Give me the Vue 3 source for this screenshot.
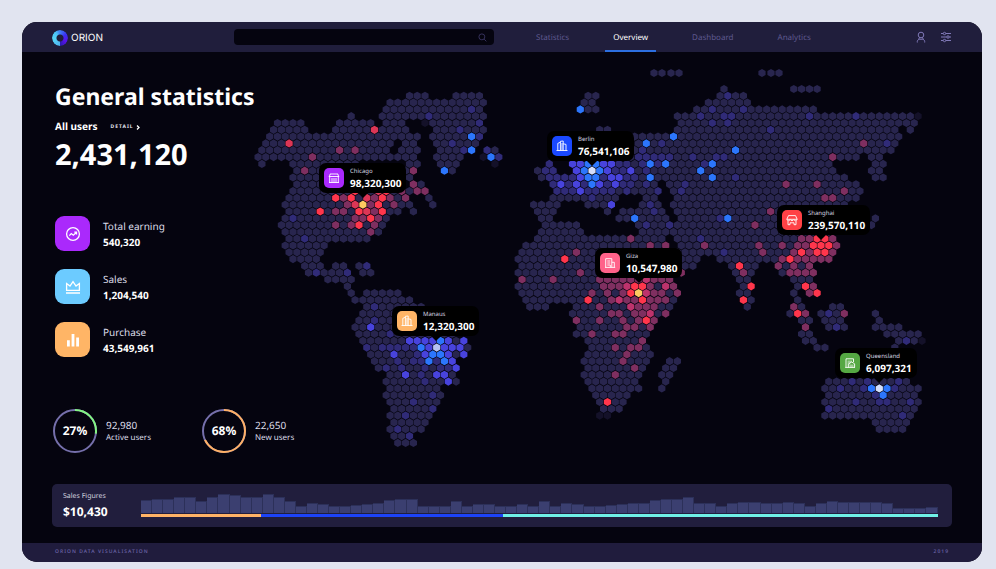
<script setup>
const nav = [
  { label: 'Statistics' },
  { label: 'Overview', active: true },
  { label: 'Dashboard' },
  { label: 'Analytics' },
]

const totals = [
  { label: 'Total earning', value: '540,320', icon: 'trend', tone: 'violet' },
  { label: 'Sales', value: '1,204,540', icon: 'crown', tone: 'sky' },
  { label: 'Purchase', value: '43,549,961', icon: 'bars', tone: 'orange' },
]

const rings = [
  { percent: 27, value: '92,980', label: 'Active users', tone: 'green' },
  { percent: 68, value: '22,650', label: 'New users', tone: 'amber' },
]

const sales = [
  13, 14, 14, 16, 16, 12, 16, 19, 18, 16, 16, 19, 16, 12, 7, 10, 9, 7, 7, 8, 9, 10, 13, 14,
  14, 7, 7, 7, 12, 7, 9, 9, 7, 7, 9, 7, 12, 7, 10, 9, 7, 7, 8, 9, 10, 10, 13, 14,
  14, 16, 10, 10, 7, 10, 11, 11, 10, 10, 11, 10, 7, 10, 12, 11, 11, 11, 11, 10, 5, 5, 5, 6,
]
const salesMax = 20

const segments = [
  { tone: 'amber', share: 120 },
  { tone: 'blue', share: 242 },
  { tone: 'cyan', share: 435 },
]

const MAP_W = 676
const MAP_H = 390

// x, y: top left corner of the label on the map; tip: arrow position inside it
const pins = [
  { city: 'Chicago', value: '98,320,300', x: 69, y: 97, tip: 44, tone: 'violet', icon: 'shop' },
  { city: 'Berlin', value: '76,541,106', x: 297, y: 65, tip: 45, tone: 'blue', icon: 'towers' },
  { city: 'Shanghai', value: '239,570,110', x: 527, y: 139, tip: 44, tone: 'red', icon: 'stall' },
  { city: 'Giza', value: '10,547,980', x: 345, y: 182, tip: 44, tone: 'pink', icon: 'office' },
  { city: 'Manaus', value: '12,320,300', x: 142, y: 240, tip: 44, tone: 'orange', icon: 'towers' },
  { city: 'Queensland', value: '6,097,321', x: 585, y: 282, tip: 44, tone: 'green', icon: 'depot' },
]

// Land cells per row of the hex grid, as column ranges
const land = [
  '61 70-73',
  '20-22 26-29 43-44 60-63',
  '18-30 43-44 59-64',
  '17-29 42-44 57-72',
  '13 17-30 55-85',
  '3-6 11-15 17-19 23-29 55-85',
  '3-7 11-20 24-30 45-46 55-83 85',
  '2-21 23-29 46-83',
  '2-18 20-21 24-29 45-83',
  '1-17 19-21 24-28 30-31 46-82',
  '1-21 24-27 31-32 46-78 80-81',
  '1 5-13 20-21 24-26 38 41-74 80-81',
  '6-15 20-21 25-26 37-39 42-75 80-81',
  '5-20 37-76 80-81',
  '6-18 21-22 39-52 54-78',
  '5-22 39-52 54-78',
  '5-20 23 39-47 51-52 55-78',
  '4-20 23 36-39 43-46 50-52 54-76',
  '5-19 21 37-39 46 48-53 55-76',
  '4-17 37-38 47-53 55-75 80',
  '4-17 38-42 50-74 80',
  '4-16 37-42 50-74',
  '5-15 37-53 55-75',
  '4-9 35-53 55-75',
  '5-9 35-75',
  '5-8 34-57 60-74',
  '7-9 11-12 14-15 35-57 62-65 68-72',
  '7-12 14-15 34-55 62-64 68-72',
  '10-13 35-54 63-64 70-72',
  '12 34-54 63-64 70-72',
  '13 15-19 35-55 63-64 70 72-73',
  '13-20 35-54 63-64 70',
  '15-22 36-38 42-54 64 70-71 75-76',
  '14-22 41-53 69-71 73-76 80',
  '14-24 42-52 71-72 74-76 81',
  '13-25 42-51 71 74-76 80-83',
  '14-26 42-51 71-72 82-86',
  '14-27 43-50 71-72 83-85',
  '15-28 44-51 73-74 83',
  '15-27 43-51',
  '16-26 43-51 54-55',
  '16-26 43-50 53-54',
  '18-26 43-50 53-54',
  '17-26 43-49 53 74-84',
  '18-24 44-50 53 74-86',
  '17-24 44-48 74-85',
  '18-24 45-48 74-86',
  '18-23 45-47 74-85',
  '18-23 74-85',
  '18-22 80-84',
  '18-22 81-84',
  '18-20',
  '19-21',
]

// Highlighted cells: tone -> row -> columns
const heat = {
  dim: { 4: '86', 5: '22', 10: '30', 11: '31', 37: '86', 48: '45-46' },
  indigo: {
    1: '61', 3: '28 59 63', 4: '23 58 61-62 72 78', 5: '29 59 61', 6: '27 67', 7: '29',
    8: '26 53 82', 9: '27 30 50', 10: '32 50-54 57 60-61', 11: '38 47-48 50 52 58',
    12: '38-39 47-48 51', 13: '38-41 45 48-49 62', 14: '39 41 43 46 48-49 51 56',
    15: '39-41 43-46 48 52 55', 16: '44', 17: '51', 18: '52', 19: '5 60', 20: '51 54',
    22: '7 58', 24: '61', 26: '15', 27: '8 12', 32: '16', 33: '74', 34: '16', 35: '75',
    36: '18', 37: '84', 38: '15 17-21', 39: '21', 40: '19 21-22 24', 41: '17 19 22 24-25',
    42: '22', 43: '22 77 79 83', 44: '76 79 83', 45: '23 80', 46: '21 78 81-82 85',
    47: '23 74', 48: '20 84', 50: '19', 51: '20',
  },
  iris: {
    11: '41-42 45-46', 12: '42 46 49', 13: '42 46-47', 14: '40 42 45 47', 15: '42', 17: '46',
    35: '15', 37: '20-23 25 27', 38: '23 25-27', 39: '18 22 25 27', 40: '26', 41: '26',
    42: '20 24-25', 43: '25',
  },
  blue: {
    3: '42', 7: '28 54', 8: '51', 9: '28 62', 10: '31', 11: '43-44 51 53 59',
    12: '25 43 45 58', 13: '43-44 51 59', 14: '44', 19: '49 61', 37: '24', 38: '22',
    39: '23-24', 40: '23 25', 44: '80 82', 45: '81',
  },
  plum: {
    8: '79', 9: '11 13', 10: '8 75', 12: '7 21', 14: '21 69 73', 15: '19 21-22 76',
    16: '12 16 18 20 74-75', 17: '12 15 18', 18: '11-12 16 67', 19: '13-14 16',
    20: '11 13 16 65', 21: '15', 22: '49 71-72 75', 23: '51 53 58 65 68 70-71 75',
    24: '42 66 70 72 75', 25: '68 70-74', 26: '68 70 72', 27: '42 55 63 69-72',
    28: '35 39 45-50 52-54', 29: '45-47 51 54 72', 30: '44 46 48 52-53 55 72',
    31: '46 48-49 51-53', 32: '45 50-52 70', 33: '46-47 49-50 53 71 76', 34: '42 45 48 50 52',
    35: '48-49 51 71', 36: '44 47-48', 37: '50', 38: '47 49-50', 39: '48', 40: '48',
    41: '49', 42: '47',
  },
  rose: { 28: '51', 29: '48 53', 30: '51', 31: '47', 32: '49', 33: '51' },
  crimson: { 6: '16', 8: '5', 15: '16', 16: '15', 17: '13', 18: '15' },
  red: {
    15: '13 17', 16: '11 13 17', 17: '16', 18: '9 14 17', 19: '15', 20: '14', 22: '73-74',
    23: '72-74', 24: '71 73-74', 25: '40 69', 26: '63', 29: '49-50 64 71', 30: '49 73',
    31: '43 50 63', 33: '70', 34: '51', 46: '46',
  },
  gold: { 17: '14', 30: '50' },
  ice: { 12: '44', 44: '81' },
  frost: { 38: '24' },
}

// Polar islands lie off the grid
const islands = [404, 412, 421, 429, 512, 521, 529].map((x) => [x, 7])

const expand = (text) =>
  text.split(' ').flatMap((part) => {
    const [from, to = from] = part.split('-').map(Number)
    return Array.from({ length: to - from + 1 }, (_, i) => from + i)
  })

const hexAt = (x, y) => `M${x.toFixed(1)} ${(y - 4.1).toFixed(1)}l3.6 2.1v4l-3.6 2.1l-3.6-2.1v-4z`
const cell = (row, col) => hexAt(0.3 + 7.765 * (col + (row % 2) / 2), 23 + 6.805 * row)

const hot = new Set()
const layers = Object.entries(heat).map(([tone, rows]) => {
  let d = ''
  for (const [row, text] of Object.entries(rows)) {
    for (const col of expand(text)) {
      hot.add(`${row}:${col}`)
      d += cell(Number(row), col)
    }
  }
  return { tone, d }
})
layers.unshift({
  tone: 'land',
  d:
    land
      .map((text, row) =>
        expand(text)
          .filter((col) => !hot.has(`${row}:${col}`))
          .map((col) => cell(row, col))
          .join(''),
      )
      .join('') + islands.map(([x, y]) => hexAt(x, y)).join(''),
})
</script>

<template>
  <div class="window">
    <header class="topbar">
      <a class="brand" href="#">
        <span class="brand-mark"></span>
        <span class="brand-name">ORION</span>
      </a>
      <label class="search">
        <input type="search" aria-label="Search" />
        <svg viewBox="0 0 10 10"><circle cx="4.3" cy="4.3" r="3.3" /><path d="M6.8 6.8L9.3 9.3" /></svg>
      </label>
      <nav class="nav">
        <a v-for="item in nav" :key="item.label" href="#" :class="{ active: item.active }">{{ item.label }}</a>
      </nav>
      <div class="tools">
        <button type="button" aria-label="Account">
          <svg viewBox="0 0 12 12"><circle cx="6" cy="4" r="2.8" /><path d="M2.3 11.5V10.4C2.3 8.8 3.9 8.2 6 8.2S9.7 8.8 9.7 10.4V11.5M4.6 6.3L3.6 8.6M7.4 6.3L8.4 8.6" /></svg>
        </button>
        <button type="button" aria-label="Settings">
          <svg viewBox="0 0 12 12"><path d="M1 2.5H3.2M5.8 2.5H11M1 6H6.7M9.3 6H11M1 9.5H3.2M5.8 9.5H11" /><circle cx="4.5" cy="2.5" r="1.2" /><circle cx="8" cy="6" r="1.2" /><circle cx="4.5" cy="9.5" r="1.2" /></svg>
        </button>
      </div>
    </header>

    <main class="content">
      <div class="stage">
        <section class="map">
          <svg class="hexes" :viewBox="`0 0 ${MAP_W} ${MAP_H}`" aria-hidden="true">
            <path v-for="layer in layers" :key="layer.tone" :class="layer.tone" :d="layer.d" />
          </svg>
          <article
            v-for="pin in pins"
            :key="pin.city"
            class="pin"
            :style="{ left: (pin.x / MAP_W) * 100 + '%', top: (pin.y / MAP_H) * 100 + '%', '--tip': pin.tip + 'px' }"
          >
            <span class="pin-icon" :class="pin.tone">
              <svg viewBox="0 0 20 20">
                <g v-if="pin.icon === 'shop'">
                  <path d="M6 6H14M5.4 8.5L6.2 6M14.6 8.5L13.8 6M4.8 8.5H15.2M5.7 8.5V14.5M14.3 8.5V14.5M5 14.5H15" />
                  <path class="soft" d="M7 10H13V14.5H7z" />
                </g>
                <g v-else-if="pin.icon === 'towers'">
                  <path d="M4.5 14.5H15.5M5.8 14.5V7.4L8.4 6.2M8.4 14.5V5.3L11.2 5V14.5M11.2 7.8L14 8.4V14.5" />
                  <path class="soft" d="M8.8 7H11V14H8.8z" />
                </g>
                <g v-else-if="pin.icon === 'stall'">
                  <path d="M6.5 5.6H13.5M6.5 5.6L4.8 9.3H15.2L13.5 5.6M5 9.5C5 11 7.5 11 8.2 9.7C8.8 11 11.2 11 11.8 9.7C12.5 11 15 11 15 9.5M6 11V14.7H8M14 11V14.7H12M8 14.7V12.8H12V14.7" />
                </g>
                <g v-else-if="pin.icon === 'office'">
                  <path d="M5.7 5.7H11.8V14.4M5.7 5.7V14.4M5 14.4H15.2M11.8 9.3H14.3V14.4M7.3 8H10.3M7.3 10H10.3M7.3 12H10.3V14.4" />
                </g>
                <g v-else>
                  <path d="M6 14.4V5.8H13.5V9M5.2 14.4H15M8.8 14.4V10.8L11.7 9L14.6 10.8V14.4" />
                  <path class="soft" d="M7.5 7.5H12V9L8.8 11V14.4H7.5zM10 11.5H13.5V14.4H10z" />
                </g>
              </svg>
            </span>
            <div>
              <h3>{{ pin.city }}</h3>
              <strong>{{ pin.value }}</strong>
            </div>
          </article>
        </section>

        <section class="summary">
          <h1>General statistics</h1>
          <div class="users">
            <h2>All users</h2>
            <a href="#">DETAIL<svg viewBox="0 0 4 5"><path d="M1 .5L3 2.5L1 4.5" /></svg></a>
          </div>
          <p class="headline">2,431,120</p>

          <ul class="totals">
            <li v-for="item in totals" :key="item.label">
              <span class="tile" :class="item.tone">
                <svg viewBox="0 0 16 16">
                  <g v-if="item.icon === 'trend'">
                    <circle cx="8" cy="8" r="6.4" />
                    <path d="M4.3 9.6L6.3 7.6L8.3 9.2L11.3 6.4M9.3 6.2H11.5V8.4" />
                  </g>
                  <g v-else-if="item.icon === 'crown'">
                    <path d="M1.6 11.3V4.5L5 7L8 2.6L11 7L14.4 4.5V11.3zM1 14H15" />
                  </g>
                  <g v-else class="solid">
                    <path d="M2 8.3H4.8V14.6H2zM6.6 2H9.4V14.6H6.6zM11.2 5.5H14V14.6H11.2z" />
                  </g>
                </svg>
              </span>
              <div>
                <h3>{{ item.label }}</h3>
                <strong>{{ item.value }}</strong>
              </div>
            </li>
          </ul>

          <ul class="rings">
            <li v-for="ring in rings" :key="ring.label">
              <div class="ring">
                <svg viewBox="0 0 44 44">
                  <circle class="track" cx="22" cy="22" r="21" />
                  <circle :class="ring.tone" cx="22" cy="22" r="21" pathLength="100" :stroke-dasharray="`${ring.percent} 100`" />
                </svg>
                <strong>{{ ring.percent }}%</strong>
              </div>
              <div>
                <p class="ring-value">{{ ring.value }}</p>
                <p class="ring-label">{{ ring.label }}</p>
              </div>
            </li>
          </ul>
        </section>
      </div>

      <section class="sales">
        <div class="sales-text">
          <h2>Sales Figures</h2>
          <strong>$10,430</strong>
        </div>
        <div class="chart">
          <div class="bars">
            <span v-for="(value, i) in sales" :key="i" :style="{ height: (value / salesMax) * 100 + '%' }"></span>
          </div>
          <div class="split">
            <span v-for="part in segments" :key="part.tone" :class="part.tone" :style="{ flexGrow: part.share }"></span>
          </div>
        </div>
      </section>
    </main>

    <footer class="footer">
      <span>ORION DATA VISUALISATION</span>
      <span>2019</span>
    </footer>
  </div>
</template>

<style>
body {
  margin: 0;
  background: #e1e4f0;
}
</style>

<style scoped>
* {
  box-sizing: border-box;
}
h1, h2, h3, p, ul {
  margin: 0;
  padding: 0;
  list-style: none;
}
a {
  color: inherit;
  text-decoration: none;
}
svg {
  display: block;
  fill: none;
}

.window {
  margin: 22px 14px 7px 22px;
  border-radius: 15px;
  overflow: hidden;
  background: #05040f;
  color: #fff;
  font-family: "Noto Sans", "Open Sans", sans-serif;
  text-rendering: geometricPrecision;
}

.topbar {
  display: flex;
  align-items: center;
  height: 30px;
  padding: 0 30px;
  background: #201e3c;
}
.brand {
  display: flex;
  align-items: center;
  gap: 3px;
  width: 182px;
  padding-top: 2px;
}
.brand-mark {
  width: 16px;
  height: 16px;
  border-radius: 50%;
  background: conic-gradient(#3f7df5, #3a2ff0 60deg, #5a12ea 120deg, #2b1bb0 178deg, #4fb4f0 182deg, #55d4f5 260deg, #4cc4f6 320deg, #3f7df5);
  -webkit-mask: radial-gradient(circle, transparent 3px, #000 4px);
  mask: radial-gradient(circle, transparent 3px, #000 4px);
}
.brand-name {
  font: 10px/14px Inter, "Liberation Sans", sans-serif;
}
.search {
  display: flex;
  align-items: center;
  flex: 0 1 260px;
  height: 16px;
  padding: 0 7px;
  border-radius: 4px;
  background: #05040f;
}
.search input {
  flex: 1;
  min-width: 0;
  height: 16px;
  padding: 0;
  border: 0;
  outline: 0;
  background: none;
  color: #fff;
  font: 8px/16px "Noto Sans", sans-serif;
}
.search svg {
  width: 9px;
  height: 9px;
  stroke: #3b3763;
}
.nav {
  display: flex;
  gap: 28px;
  margin-left: 34px;
  align-self: stretch;
}
.nav a {
  padding: 1px 8px 0;
  border-bottom: 2px solid transparent;
  color: #5f598f;
  font-size: 8px;
  line-height: 29px;
}
.nav a.active {
  color: #fff;
  border-color: #2c6fe0;
}
.tools {
  display: flex;
  gap: 13px;
  margin-left: auto;
}
.tools button {
  width: 12px;
  height: 12px;
  padding: 0;
  border: 0;
  background: none;
}
.tools svg {
  stroke: #8079b8;
}

.content {
  padding-bottom: 16px;
}
.stage {
  display: grid;
}
.map,
.summary {
  grid-area: 1 / 1;
}
.map {
  position: relative;
  align-self: start;
  margin: 14px 56px 0 228px;
}
.hexes { width: 100%; }
.land { fill: #28254e; }
.dim { fill: #141129; }
.indigo { fill: #302b78; }
.iris { fill: #4843dd; }
.hexes .blue { fill: #2c76fc; }
.plum { fill: #7f2f60; }
.rose { fill: #bd336c; }
.crimson { fill: #dc3656; }
.hexes .red { fill: #ff364c; }
.gold { fill: #fdca60; }
.ice { fill: #d3defb; }
.frost { fill: #b6c2f2; }

.pin {
  position: absolute;
  display: flex;
  align-items: center;
  gap: 6px;
  height: 30px;
  padding: 0 5px;
  border-radius: 7px;
  background: #000;
  white-space: nowrap;
}
.pin::after {
  content: "";
  position: absolute;
  top: 100%;
  left: var(--tip);
  margin-left: -5px;
  border: 5px solid transparent;
  border-top-color: #000;
  border-bottom: 0;
}
.pin-icon {
  width: 20px;
  height: 20px;
  border-radius: 5px;
}
.pin-icon svg {
  stroke: #fff;
  stroke-width: 0.9;
}
.pin-icon .soft {
  fill: #fff;
  fill-opacity: 0.45;
  stroke: none;
}
.pin h3 {
  color: #d9d9e4;
  font-size: 6px;
  font-weight: 400;
  line-height: 10px;
}
.pin strong {
  display: block;
  font-size: 10px;
  line-height: 14px;
}
.violet { background: #aa29fc; }
.sky { background: #6ccbff; }
.orange { background: #ffb566; }
.pin-icon.blue { background: #1a49ff; }
.pin-icon.red { background: #ff4146; }
.pin-icon.pink { background: #ff6289; }
.pin-icon.green { background: #55a843; }

.summary {
  justify-self: start;
  padding: 27px 0 0 33px;
}
h1 {
  font-size: 23px;
  font-weight: 700;
  line-height: 34px;
}
.users {
  display: flex;
  align-items: center;
  gap: 13px;
  margin-top: 6px;
}
.users h2 {
  font-size: 10px;
  line-height: 14px;
}
.users a {
  display: flex;
  align-items: center;
  gap: 2px;
  padding-top: 2px;
  color: #e8e8f2;
  font-size: 5px;
  font-weight: 700;
  letter-spacing: 1px;
  line-height: 8px;
}
.users a svg {
  width: 4px;
  height: 5px;
  stroke: #fff;
  stroke-width: 1.3;
}
.headline {
  margin-top: 4px;
  font-size: 29px;
  font-weight: 700;
  line-height: 36px;
}
.totals {
  display: grid;
  gap: 18px;
  margin-top: 43px;
}
.totals li {
  display: flex;
  align-items: center;
  gap: 13px;
}
.tile {
  display: grid;
  place-items: center;
  width: 35px;
  height: 35px;
  border-radius: 9px;
}
.tile svg {
  width: 16px;
  height: 16px;
  stroke: #fff;
  stroke-width: 1.3;
}
.tile .solid {
  fill: #fff;
  stroke: none;
}
.totals h3 {
  color: #dcdce8;
  font-size: 10px;
  font-weight: 400;
  line-height: 16px;
}
.totals strong {
  display: block;
  font-size: 10px;
  line-height: 16px;
}
.rings {
  display: flex;
  gap: 46px;
  margin: 52px 0 0 -2px;
}
.rings li {
  display: flex;
  align-items: center;
  gap: 9px;
  min-width: 103px;
}
.ring {
  display: grid;
  place-items: center;
  width: 44px;
  height: 44px;
}
.ring > * {
  grid-area: 1 / 1;
}
.ring svg {
  width: 44px;
  height: 44px;
  transform: rotate(-90deg);
  stroke-width: 2;
}
.track { stroke: #756fab; }
.ring .green { stroke: #83f583; }
.ring .amber { stroke: #ffb065; }
.ring strong {
  font-size: 12px;
  line-height: 16px;
}
.ring-value {
  color: #dcdce8;
  font-size: 10px;
  line-height: 14px;
}
.ring-label {
  color: #dcdce8;
  font-size: 8px;
  line-height: 12px;
}

.sales {
  display: flex;
  align-items: center;
  height: 43px;
  margin: 28px 30px 0;
  padding: 0 14px 0 11px;
  border-radius: 5px;
  background: #211e3d;
}
.sales-text {
  width: 78px;
}
.sales h2 {
  color: #d0d0de;
  font-size: 7px;
  font-weight: 400;
  line-height: 12px;
}
.sales strong {
  display: block;
  font-size: 12px;
  line-height: 18px;
}
.chart {
  flex: 1;
  padding-bottom: 1px;
}
.bars {
  display: flex;
  align-items: flex-end;
  height: 20px;
}
.bars span {
  flex: 1;
  border-top: 1px solid #2c3059;
  border-right: 1px solid #2c3059;
  background: #3b3f70;
}
.split {
  display: flex;
  height: 3px;
  margin-top: 1px;
}
.split .amber { background: #ffb366; }
.split .blue { background: #1c43f7; }
.split .cyan { background: #6ff0e6; }

.footer {
  display: flex;
  justify-content: space-between;
  height: 19px;
  padding: 0 33px;
  background: #201c3d;
  color: #665fa0;
  font-size: 5px;
  font-weight: 600;
  letter-spacing: 1px;
  line-height: 19px;
}
</style>
